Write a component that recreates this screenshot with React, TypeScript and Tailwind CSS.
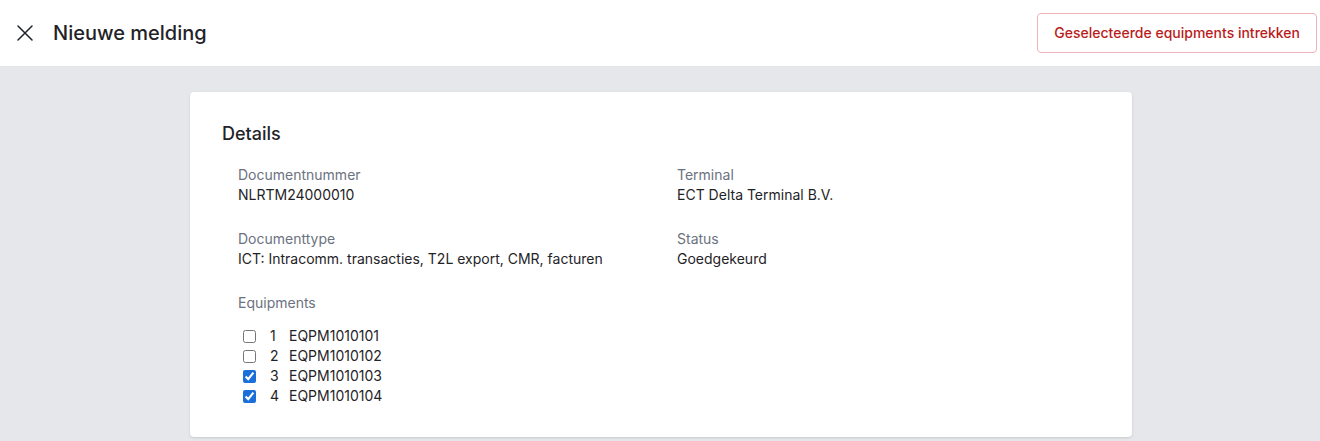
const equipments = [
  { nr: 1, code: 'EQPM1010101', checked: false },
  { nr: 2, code: 'EQPM1010102', checked: false },
  { nr: 3, code: 'EQPM1010103', checked: true },
  { nr: 4, code: 'EQPM1010104', checked: true },
];

const Field = ({ label, value }: { label: string; value: string }) => (
  <div>
    <div className="text-sm leading-5 text-[#6b7280]">{label}</div>
    <div className="text-sm leading-5 text-[#1f2328]">{value}</div>
  </div>
);

export default function App() {
  return (
    <div className="min-h-[441px] bg-[#e5e7eb] font-['Inter',sans-serif]">
      <header className="h-[67px] bg-white border-b border-[#e2e4e8] flex items-center justify-between pl-[17px] pr-[3px]">
        <div className="flex items-center">
          <svg width="16" height="16" viewBox="0 0 16 16" className="text-[#1f2328]">
            <path d="M1 1L15 15M15 1L1 15" stroke="currentColor" strokeWidth="1.5" strokeLinecap="round" />
          </svg>
          <h1 className="ml-[20px] text-xl font-medium text-[#1f2328]">Nieuwe melding</h1>
        </div>
        <button className="h-10 px-4 rounded border border-[#f0b4b8] bg-white text-sm font-medium text-[#b91c1c]">
          Geselecteerde equipments intrekken
        </button>
      </header>

      <main className="pt-[25px] flex justify-center pl-[2px]">
        <div className="w-[942px] bg-white rounded shadow-sm px-8 pt-[28px] pb-[31px]">
          <h2 className="text-lg leading-7 font-medium text-[#1f2328]">Details</h2>
          <div className="mt-[17px] px-4 grid grid-cols-2 gap-x-8 gap-y-6">
            <Field label="Documentnummer" value="NLRTM24000010" />
            <Field label="Terminal" value="ECT Delta Terminal B.V." />
            <Field label="Documenttype" value="ICT: Intracomm. transacties, T2L export, CMR, facturen" />
            <Field label="Status" value="Goedgekeurd" />
            <div>
              <div className="text-sm leading-5 text-[#6b7280]">Equipments</div>
              <ul className="mt-[13px]">
                {equipments.map((e) => (
                  <li key={e.nr} className="flex items-center h-5 text-sm text-[#1f2328]">
                    <input
                      type="checkbox"
                      defaultChecked={e.checked}
                      className="ml-[5px] w-[13px] h-[13px] accent-[#1a6fd8]"
                    />
                    <span className="ml-[14px] w-[19px]">{e.nr}</span>
                    <span>{e.code}</span>
                  </li>
                ))}
              </ul>
            </div>
          </div>
        </div>
      </main>
    </div>
  );
}
